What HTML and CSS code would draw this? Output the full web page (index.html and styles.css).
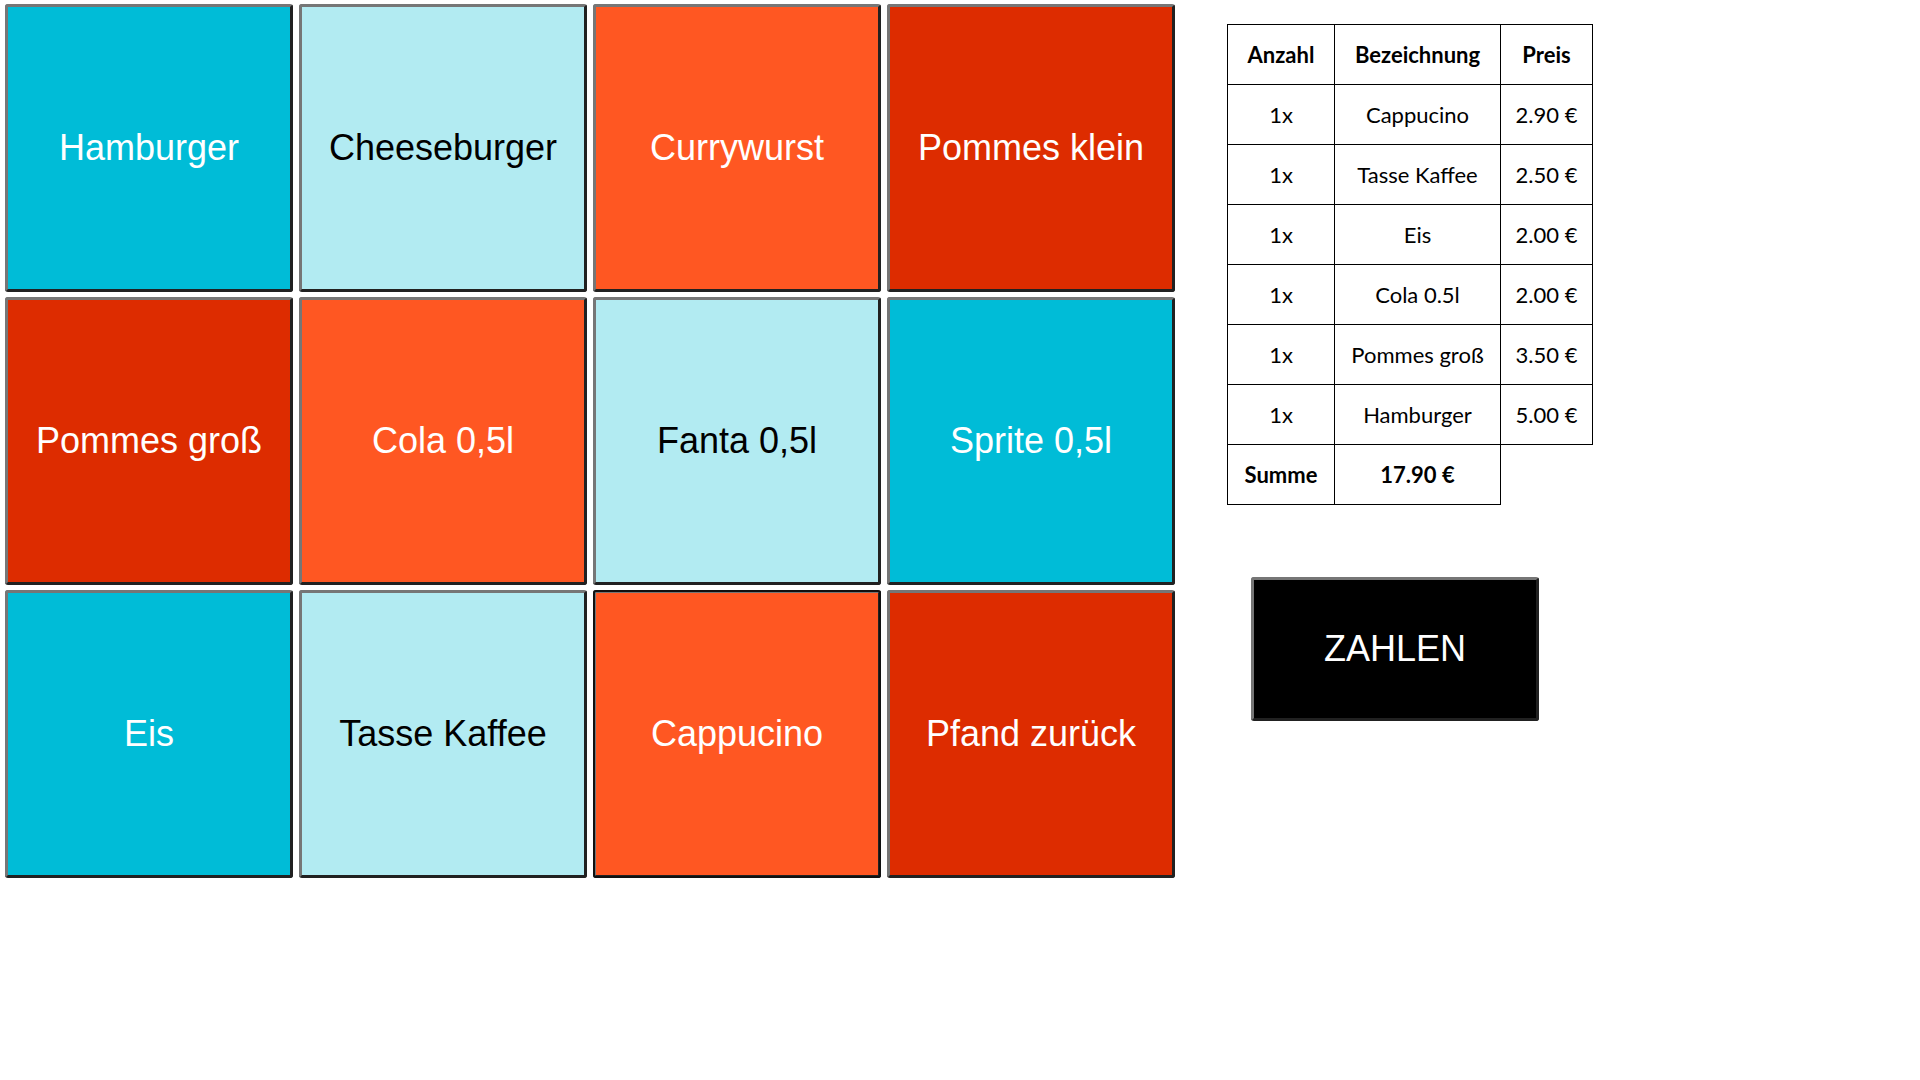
FILE: index.html
```html
<!DOCTYPE html>
<html lang="de">
<head>
<meta charset="utf-8">
<title>Kasse</title>
<link rel="stylesheet" href="styles.css">
</head>
<body>
<main class="register">
  <section class="products" aria-label="Artikel">
    <button type="button" class="tile cyan">Hamburger</button>
    <button type="button" class="tile pale">Cheeseburger</button>
    <button type="button" class="tile orange">Currywurst</button>
    <button type="button" class="tile red">Pommes klein</button>
    <button type="button" class="tile red">Pommes groß</button>
    <button type="button" class="tile orange">Cola 0,5l</button>
    <button type="button" class="tile pale">Fanta 0,5l</button>
    <button type="button" class="tile cyan">Sprite 0,5l</button>
    <button type="button" class="tile cyan">Eis</button>
    <button type="button" class="tile pale">Tasse Kaffee</button>
    <button type="button" class="tile orange selected">Cappucino</button>
    <button type="button" class="tile red">Pfand zurück</button>
  </section>
  <section class="checkout" aria-label="Bestellung">
    <table class="receipt">
      <thead>
        <tr><th class="count" scope="col">Anzahl</th><th class="name" scope="col">Bezeichnung</th><th class="price" scope="col">Preis</th></tr>
      </thead>
      <tbody>
        <tr><td>1x</td><td>Cappucino</td><td>2.90 €</td></tr>
        <tr><td>1x</td><td>Tasse Kaffee</td><td>2.50 €</td></tr>
        <tr><td>1x</td><td>Eis</td><td>2.00 €</td></tr>
        <tr><td>1x</td><td>Cola 0.5l</td><td>2.00 €</td></tr>
        <tr><td>1x</td><td>Pommes groß</td><td>3.50 €</td></tr>
        <tr><td>1x</td><td>Hamburger</td><td>5.00 €</td></tr>
      </tbody>
      <tfoot>
        <tr><th scope="row">Summe</th><th>17.90 €</th></tr>
      </tfoot>
    </table>
    <button type="button" class="tile pay">ZAHLEN</button>
  </section>
</main>
</body>
</html>
```
FILE: styles.css
```css
* {
  box-sizing: border-box;
}

body {
  margin: 0;
  background: #fff;
  color: #000;
  font-family: Lato, sans-serif;
}

.register {
  display: flex;
  align-items: flex-start;
  gap: 52px;
  padding: 4px 5px;
}

.products {
  display: grid;
  grid-template-columns: repeat(4, 15vw);
  gap: 5px 6px;
}

.tile {
  width: 15vw;
  height: 15vw;
  padding: 0;
  border: 3px solid;
  border-color: #767676 #212121 #212121 #767676;
  border-radius: 3px;
  color: #fff;
  font-family: "Liberation Sans", Arial, sans-serif;
  font-size: 36px;
}

.cyan {
  background: #00bcd7;
}

.pale {
  background: #b2ebf2;
  color: #000;
}

.orange {
  background: #ff5722;
}

.red {
  background: #dd2c00;
}

.selected {
  outline: 2px solid #101010;
  outline-offset: -2px;
}

.checkout {
  padding-top: 20px;
}

.receipt {
  border-collapse: collapse;
  font-size: 22px;
  line-height: 24px;
  text-align: center;
}

.receipt th,
.receipt td {
  height: 60px;
  padding: 0;
  border: 1px solid #000;
}

.receipt .count {
  width: 107px;
}

.receipt .name {
  width: 166px;
}

.receipt .price {
  width: 92px;
}

.pay {
  height: 7.5vw;
  margin: 72px 24px 0;
  background: #000;
}
```
